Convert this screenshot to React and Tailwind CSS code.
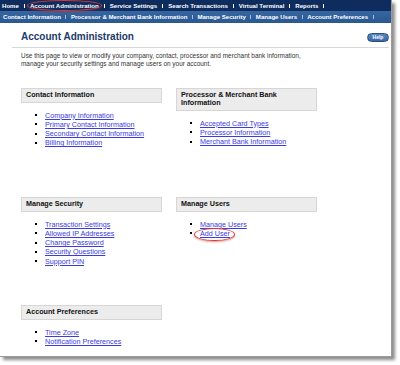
import React from "react";

const topNav = [
  "Home",
  "Account Administration",
  "Service Settings",
  "Search Transactions",
  "Virtual Terminal",
  "Reports",
];

const subNav = [
  "Contact Information",
  "Processor & Merchant Bank Information",
  "Manage Security",
  "Manage Users",
  "Account Preferences",
];

const sections = [
  {
    title: "Contact Information",
    links: [
      "Company Information",
      "Primary Contact Information",
      "Secondary Contact Information",
      "Billing Information",
    ],
  },
  {
    title: "Processor & Merchant Bank Information",
    links: ["Accepted Card Types", "Processor Information", "Merchant Bank Information"],
  },
  {
    title: "Manage Security",
    links: [
      "Transaction Settings",
      "Allowed IP Addresses",
      "Change Password",
      "Security Questions",
      "Support PIN",
    ],
  },
  {
    title: "Manage Users",
    links: ["Manage Users", "Add User"],
  },
  {
    title: "Account Preferences",
    links: ["Time Zone", "Notification Preferences"],
  },
];

// red ring drawn over a highlighted item
function Circled({ children, className }) {
  return (
    <span className="relative inline-flex items-center">
      {children}
      <span
        className={`absolute rounded-[50%] border border-[#d83a3a] shadow-[0_1px_2px_rgba(200,40,40,0.5)] pointer-events-none ${className}`}
      />
    </span>
  );
}

function Section({ title, links }) {
  return (
    <div>
      <div className="border border-[#d6d6d6] bg-[#ececec] px-[4px] py-[2.5px] text-[7.2px] leading-[8px] font-bold text-[#111]">
        {title}
      </div>
      <ul className="mt-[8px]">
        {links.map((link) => (
          <li key={link} className="flex items-center h-[9.3px] pl-[14px]">
            <span className="w-[2px] h-[2px] bg-black mr-[8px]" />
            {link === "Add User" ? (
              <Circled className="-left-[6px] -right-[5px] -top-[1px] -bottom-[3px]">
                <a className="block text-[7.2px] leading-[9.3px] text-[#3b3be4] underline">{link}</a>
              </Circled>
            ) : (
              <a className="text-[7.2px] leading-[9.3px] text-[#3b3be4] underline">{link}</a>
            )}
          </li>
        ))}
      </ul>
    </div>
  );
}

export default function App() {
  return (
    <div
      className="w-[400px] h-[365px] bg-white"
      style={{ fontFamily: '"Liberation Sans", Arial, sans-serif' }}
    >
      <div className="w-[392px] h-[357px] bg-white border-r border-b border-[#9a9a9a] shadow-[3px_3px_3px_rgba(0,0,0,0.45)] overflow-hidden">
        {/* top navigation */}
        <div className="h-[11px] bg-[#0e2d5e] flex items-center pl-[2px] text-white text-[6.1px] font-bold">
          {topNav.map((item) => (
            <React.Fragment key={item}>
              {item === "Account Administration" ? (
                <Circled className="-left-[3px] -right-[3px] -top-[1.5px] -bottom-[1px]">
                  <span className="block whitespace-nowrap leading-[8px]">{item}</span>
                </Circled>
              ) : (
                <span className="whitespace-nowrap">{item}</span>
              )}
              <span className="w-[1px] h-[4px] bg-white mx-[5px]" />
            </React.Fragment>
          ))}
        </div>
        <div className="h-[12px] bg-gradient-to-b from-[#3666a2] to-[#2a5890] flex items-center pl-[3px] text-white text-[6.1px] font-bold">
          {subNav.map((item) => (
            <React.Fragment key={item}>
              <span className="whitespace-nowrap">{item}</span>
              <span className="w-[1px] h-[4px] bg-[#a8bedc] mx-[4.5px]" />
            </React.Fragment>
          ))}
        </div>

        {/* page body */}
        <div className="pt-[8px] pr-[2px]">
          <div className="flex items-end justify-between pl-[21px]">
            <h1 className="text-[10px] leading-[12px] font-bold text-[#1c3a6b]">
              Account Administration
            </h1>
            <button className="w-[22px] h-[9px] rounded-full border border-[#2c4f80] bg-gradient-to-b from-[#5a87c2] to-[#3a67a4] text-white text-[5px] font-bold leading-none mb-[1px]">
              Help
            </button>
          </div>
          <div className="ml-[12px] mt-[4px] h-[1px] bg-[#d8d8d8]" />
          <p className="pl-[21px] mt-[4px] text-[6.45px] leading-[8px] text-[#333]">
            Use this page to view or modify your company, contact, processor and merchant bank information,
            <br />
            manage your security settings and manage users on your account.
          </p>

          <div className="pl-[21px] mt-[19.5px] grid grid-cols-[141px_141px] grid-rows-[109px_108px_auto] gap-x-[14px]">
            {sections.map((s) => (
              <Section key={s.title} title={s.title} links={s.links} />
            ))}
          </div>
        </div>
      </div>
    </div>
  );
}
